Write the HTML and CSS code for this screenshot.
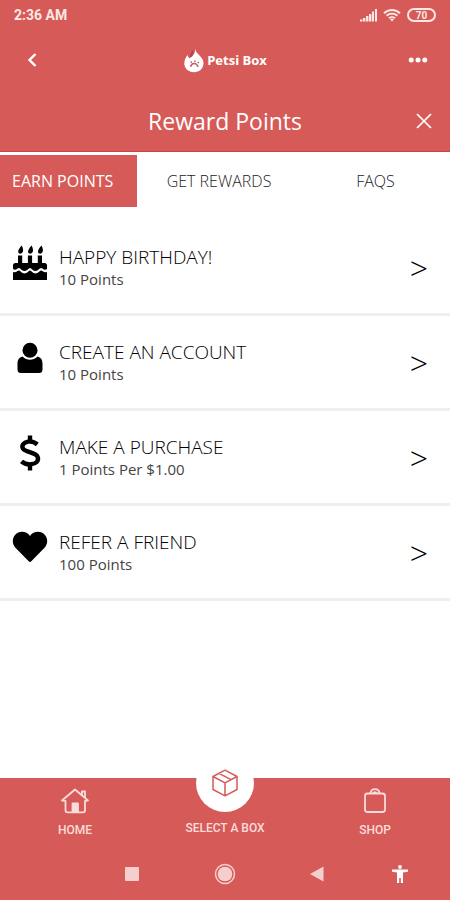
FILE: index.html
```html
<!DOCTYPE html>
<html lang="en">
<head>
<meta charset="utf-8">
<meta name="viewport" content="width=device-width, initial-scale=1">
<title>Reward Points</title>
<link rel="stylesheet" href="styles.css">
</head>
<body>
<div class="app">
  <header class="top">
    <div class="status">
      <span class="time">2:36 AM</span>
      <span class="indicators">
        <svg width="17" height="13" viewBox="0 0 17 13" fill="currentColor" aria-hidden="true"><path d="M0 10.500h2.400v2H0zM3 9h2.400v3.500H3zM6 7h2.400v5.500H6zM9 5h2.400v7.500H9zM12 2.500h2v10h-2zM15 0h2v12.500h-2z"/></svg>
        <svg width="18" height="14" viewBox="0 0 18 14" fill="none" stroke="currentColor" stroke-width="1.900" aria-hidden="true"><path d="M1 5.200a11.500 11.500 0 0 1 16 0M3.600 7.800a7.800 7.800 0 0 1 10.800 0M6 10.300a4.300 4.300 0 0 1 6 0"/><path d="M9 13.500l-2-2.200a3 3 0 0 1 4 0z" fill="currentColor" stroke="none"/></svg>
        <span class="battery">70</span>
      </span>
    </div>
    <div class="appbar">
      <button class="icon-btn" type="button" aria-label="Back">
        <svg width="14" height="16" viewBox="0 0 14 16" fill="none" stroke="currentColor" stroke-width="2.400"><path d="M10.500 2L4.500 8l6 6"/></svg>
      </button>
      <div class="brand">
        <svg width="22" height="25" viewBox="0 0 22 25" aria-hidden="true">
          <path d="M12.200 1c.4 3 3 5 5 7.300 2.200 2.200 3.300 4.400 3.300 7 0 5-4 9-9.500 9s-9.700-3.800-9.700-9c0-3.300 1.500-6 3.400-8.300.2 1.700.8 2.800 2 3.300C9.400 8.500 12.200 6 12.200 1z" fill="#fff"/>
          <path d="M7.200 7.600C7.600 5 9 3.500 10.600 2.500c-.2 3-1.200 5.500-3 7z" fill="#a9435c"/>
          <path d="M7.500 18.800c.8-2.800 2.600-3.600 4.300-3.300 1.800.3 2.600 1.800 3.400 3.300M7.600 14.600l1.200-1M11.200 13.200h1.400M14.800 14l1 1" fill="none" stroke="#c95a60" stroke-width="1.500"/>
        </svg>
        <span>Petsi Box</span>
      </div>
      <button class="icon-btn" type="button" aria-label="More options">
        <svg width="20" height="6" viewBox="0 0 20 6" fill="currentColor"><circle cx="3.200" cy="3" r="2.500"/><circle cx="10" cy="3" r="2.500"/><circle cx="16.800" cy="3" r="2.500"/></svg>
      </button>
    </div>
    <div class="titlebar">
      <h1>Reward Points</h1>
      <button class="close" type="button" aria-label="Close">
        <svg width="16" height="16" viewBox="0 0 16 16" fill="none" stroke="currentColor" stroke-width="1.700"><path d="M1 1l14 14M15 1L1 15"/></svg>
      </button>
    </div>
  </header>

  <nav class="tabs">
    <button class="tab active" type="button">EARN POINTS</button>
    <button class="tab" type="button">GET REWARDS</button>
    <button class="tab" type="button">FAQS</button>
  </nav>

  <main>
    <ul class="list">
      <li><a class="row" href="#birthday">
        <svg class="row-icon" viewBox="0 0 36 36" aria-hidden="true"><path d="M6 10.500h4.200v9H6zM15.900 10.500h4.200v9h-4.200zM25.800 10.500H30v9h-4.200zM9.700.500c2.300 4.300 1.700 8-1.200 8.200C5 8.500 5.500 5 9.700.500zM19.600.500c2.300 4.300 1.700 8-1.200 8.200-3.500-.2-3-3.700 1.200-8.200zM29.500.500c2.300 4.300 1.700 8-1.200 8.200-3.500-.2-3-3.700 1.200-8.200z"/><path d="M1 24v-3.500Q1 18 3.500 18h29q2.500 0 2.500 2.500V24c-3 2-4.500-1-6-1-2 0-2.500 3-5.500 3S19.500 23 18 23s-2.500 3-5.500 3S8.500 23 7 23c-1.500 0-3 3-6 1zM1 35v-8c3.500 1 4.500-1.500 6-1.500s2.500 3 5.500 3 4-3 5.500-3 2.500 3 5.500 3 4-3 5.500-3 2.500 2.500 6 1.500v8z"/></svg>
        <span class="row-text"><span class="row-title">HAPPY BIRTHDAY!</span><span class="row-sub">10 Points</span></span>
        <span class="arrow" aria-hidden="true">&gt;</span>
      </a></li>
      <li><a class="row" href="#account">
        <svg class="row-icon" viewBox="0 0 36 36" aria-hidden="true"><circle cx="18" cy="10.200" r="7.500"/><path d="M10.500 16.500c4.500 4.300 10.500 4.300 15 0 3.500.8 5 3.500 5 7.500v5.500q0 3.500-3.500 3.500H9q-3.500 0-3.500-3.500V24c0-4 1.500-6.700 5-7.500z"/></svg>
        <span class="row-text"><span class="row-title">CREATE AN ACCOUNT</span><span class="row-sub">10 Points</span></span>
        <span class="arrow" aria-hidden="true">&gt;</span>
      </a></li>
      <li><a class="row" href="#purchase">
        <svg class="row-icon" viewBox="0 0 36 36" aria-hidden="true"><path d="M18 .500v6M18 29.500v6M25.300 9.500C22.500 7 19 6.200 16 6.700c-4.500.7-6.800 4-5 7 2.200 3.700 12.500 3.500 14.500 8 1.800 4-1.500 7.300-6.500 7.600-3.800.2-7.200-.8-9.500-3" fill="none" stroke="currentColor" stroke-width="4.400"/></svg>
        <span class="row-text"><span class="row-title">MAKE A PURCHASE</span><span class="row-sub">1 Points Per $1.00</span></span>
        <span class="arrow" aria-hidden="true">&gt;</span>
      </a></li>
      <li><a class="row" href="#refer">
        <svg class="row-icon" viewBox="0 0 36 36" aria-hidden="true"><path d="M18 6C21.500.8 29 .5 33 5c3.500 4.500 2.500 9.500-.7 13L19.300 31.300q-1.300 1.300-2.600 0L3.700 18C.5 14.500-.5 9.500 3 5c4-4.500 11.500-4.200 15 1z"/></svg>
        <span class="row-text"><span class="row-title">REFER A FRIEND</span><span class="row-sub">100 Points</span></span>
        <span class="arrow" aria-hidden="true">&gt;</span>
      </a></li>
    </ul>
  </main>

  <footer class="bottom">
    <nav class="nav">
      <a class="nav-item" href="#home">
        <svg width="30" height="26" viewBox="0 0 30 26" fill="none" stroke="currentColor" stroke-width="1.800" stroke-linejoin="round" stroke-linecap="round" aria-hidden="true"><path d="M2 12.500L15 1.500l13 11-3 .3v9.500q0 2-2 2H7.500q-2 0-2-2v-9.500zM22 7V3.500h3v6"/><path d="M12.500 24v-8.500h5.500V24z" fill="currentColor"/></svg>
        <span>HOME</span>
      </a>
      <a class="nav-item center" href="#select">
        <span class="bubble">
          <svg width="26" height="28" viewBox="0 0 26 28" fill="none" stroke="currentColor" stroke-width="1.500" stroke-linejoin="round" aria-hidden="true"><path d="M13 1.200L25 7.500v13L13 26.800 1 20.500v-13zM1 7.500l12 6.300 12-6.300M13 13.800v13M7 4.400l12 6.300"/></svg>
        </span>
        <span>SELECT A BOX</span>
      </a>
      <a class="nav-item" href="#shop">
        <svg width="24" height="26" viewBox="0 0 24 26" fill="none" stroke="currentColor" stroke-width="1.800" aria-hidden="true"><rect x="2" y="5.500" width="20" height="18.500" rx="2.500"/><path d="M7.500 5.500c.3-2.800 2-4.300 4.500-4.300s4.200 1.500 4.500 4.300M10 5.500q2-2.500 4 0"/></svg>
        <span>SHOP</span>
      </a>
    </nav>
    <div class="system">
      <button type="button" aria-label="Recent apps"><svg width="14" height="14" viewBox="0 0 14 14" fill="currentColor"><rect width="14" height="14" rx="1"/></svg></button>
      <button type="button" aria-label="Home screen"><svg width="22" height="22" viewBox="0 0 22 22"><circle cx="11" cy="11" r="9.500" fill="none" stroke="currentColor" stroke-width="1.500"/><circle cx="11" cy="11" r="7.300" fill="currentColor"/></svg></button>
      <button type="button" aria-label="System back"><svg width="14" height="16" viewBox="0 0 14 16" fill="currentColor"><path d="M0 8L13.500.500v15z"/></svg></button>
      <button class="bright" type="button" aria-label="Accessibility"><svg width="16" height="18" viewBox="0 0 16 18" fill="currentColor"><circle cx="8" cy="2" r="1.900"/><path d="M0 4.500h16v2.300l-5 .8V18H8.800v-5H7.200v5H5V7.600l-5-.8z"/></svg></button>
    </div>
  </footer>
</div>
</body>
</html>
```

FILE: styles.css
```css
:root {
  --red: #d65a57;
  --pale: #fbdcda;
}

* {
  box-sizing: border-box;
}

body {
  margin: 0;
  background: #fff;
  font-family: "Open Sans", sans-serif;
}

button {
  border: 0;
  padding: 0;
  background: none;
  color: inherit;
  font: inherit;
}

a {
  color: inherit;
  text-decoration: none;
}

svg {
  display: block;
}

.app {
  min-height: 100vh;
  display: flex;
  flex-direction: column;
}

.top {
  background: var(--red);
  border-bottom: 1px solid #cf4440;
  color: #fff;
}

.status {
  display: flex;
  align-items: center;
  justify-content: space-between;
  height: 30px;
  padding: 0 14px;
  color: #fde8e6;
  font: 700 14px/20px Roboto, sans-serif;
}

.indicators {
  display: flex;
  align-items: center;
  gap: 6px;
}

.battery {
  width: 29px;
  height: 14px;
  border: 2px solid currentColor;
  border-radius: 7px;
  font-size: 10px;
  line-height: 11px;
  text-align: center;
}

.appbar {
  display: flex;
  align-items: center;
  justify-content: space-between;
  height: 60px;
  padding: 0 20px;
}

.icon-btn {
  display: grid;
  place-items: center;
  width: 24px;
  height: 32px;
}

.brand {
  display: flex;
  align-items: center;
  gap: 2px;
  font: 700 13px/16px "Open Sans", sans-serif;
}

.titlebar {
  display: grid;
  grid-template-columns: 1fr auto 1fr;
  align-items: center;
  height: 61px;
  padding: 0 18px;
}

.titlebar h1 {
  grid-column: 2;
  margin: 0;
  font-size: 23px;
  line-height: 32px;
  font-weight: 400;
}

.close {
  justify-self: end;
}

.tabs {
  display: grid;
  grid-template-columns: 137fr 164fr 149fr;
  margin-top: 3px;
}

.tab {
  height: 52px;
  color: #222;
  font-size: 16px;
  font-weight: 300;
}

.tab.active {
  padding-left: 12px;
  background: var(--red);
  color: #fff;
  font-weight: 400;
  text-align: left;
}

.list {
  margin: 14px 0 0;
  padding: 0;
  list-style: none;
}

.row {
  display: flex;
  align-items: flex-start;
  height: 95px;
  padding: 24px 22px 0 12px;
  border-bottom: 3px solid #efefef;
  color: #000;
}

.row-icon {
  width: 36px;
  height: 36px;
}

.row-text {
  display: flex;
  flex: 1;
  flex-direction: column;
  margin-left: 11px;
}

.row-title {
  font-size: 19px;
  line-height: 24px;
  font-weight: 300;
}

.row-sub {
  color: #444;
  font-size: 15px;
  line-height: 20px;
}

.arrow {
  font-size: 32px;
  line-height: 46px;
  font-weight: 300;
}

.bottom {
  margin-top: auto;
  background: var(--red);
  color: var(--pale);
}

.nav {
  display: grid;
  grid-template-columns: repeat(3, 1fr);
  height: 70px;
  font: 500 12px/16px Roboto, sans-serif;
}

.nav-item {
  display: flex;
  flex-direction: column;
  align-items: center;
  gap: 8px;
  padding-top: 10px;
}

.nav-item.center {
  margin-top: -24px;
  padding-top: 0;
}

.bubble {
  display: grid;
  place-items: center;
  width: 58px;
  height: 58px;
  border-radius: 50%;
  background: #fff;
  color: var(--red);
}

.system {
  display: grid;
  grid-template-columns: 179fr 92fr 92fr 74fr;
  align-items: center;
  height: 52px;
  padding-right: 13px;
  color: #f5cfce;
}

.system button {
  justify-self: center;
}

.system button:first-child {
  justify-self: end;
  padding-right: 40px;
}

.system .bright {
  color: #fff;
}
```
